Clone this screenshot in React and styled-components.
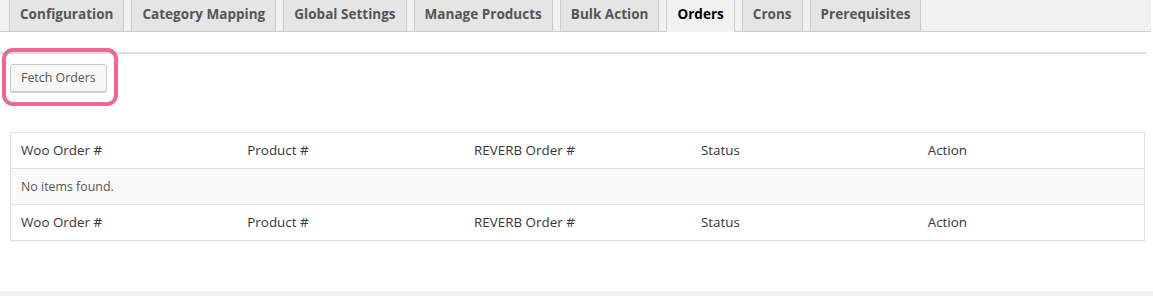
import styled, { createGlobalStyle } from "styled-components";

const GlobalStyle = createGlobalStyle`
  body {
    margin: 0;
    background: #ffffff;
    font-family: "Open Sans", "Noto Sans", sans-serif;
  }
`;

const tabs = [
  "Configuration",
  "Category Mapping",
  "Global Settings",
  "Manage Products",
  "Bulk Action",
  "Orders",
  "Crons",
  "Prerequisites",
];

const columns = ["Woo Order #", "Product #", "REVERB Order #", "Status", "Action"];

const Page = styled.div`
  width: 1153px;
`;

const TabBar = styled.nav`
  display: flex;
  gap: 7px;
  width: 1151px;
  height: 32px;
  box-sizing: border-box;
  padding-left: 9px;
  background: #f1f1f1;
  border-bottom: 1px solid #cccccc;
`;

const Tab = styled.a`
  display: block;
  padding: 2px 10px 5px;
  margin-bottom: -1px;
  line-height: 24px;
  font-size: 13.5px;
  font-weight: 700;
  letter-spacing: 0.02px;
  color: ${(p) => (p.$active ? "#000000" : "#555555")};
  background: ${(p) => (p.$active ? "#f1f1f1" : "#e5e5e5")};
  border: 1px solid #cccccc;
  border-top: none;
  border-bottom-color: ${(p) => (p.$active ? "#f1f1f1" : "#cccccc")};
  text-decoration: none;
  white-space: nowrap;
`;

const Panel = styled.section`
  height: 259px;
  box-sizing: border-box;
  padding-top: 20px;
`;

const Divider = styled.hr`
  margin: 0;
  width: 1146px;
  height: 2px;
  border: none;
  background: #dddddd;
`;

const ActionRow = styled.div`
  position: relative;
  display: flex;
  padding: 10px 0 0 10px;
`;

const Highlight = styled.span`
  position: absolute;
  left: 2px;
  top: -6px;
  width: 116px;
  height: 58px;
  box-sizing: border-box;
  border: 4px solid #ef6792;
  border-radius: 11px;
  pointer-events: none;
`;

const Button = styled.button`
  height: 28px;
  padding: 0 10px;
  font-family: inherit;
  font-size: 12.4px;
  line-height: 26px;
  color: #555555;
  background: #f7f7f7;
  border: 1px solid #cccccc;
  border-radius: 3px;
  box-shadow: 0 1px 0 #cccccc;
  cursor: pointer;
`;

const Table = styled.table`
  width: 1135px;
  margin: 40px 0 0 10px;
  border-collapse: collapse;
  table-layout: fixed;
  border: 1px solid #e1e1e1;
  box-shadow: 0 1px 1px rgba(0, 0, 0, 0.04);
`;

const HeadCell = styled.th`
  padding: 8px 10px;
  height: 19px;
  line-height: 19px;
  font-size: 13.4px;
  font-weight: 400;
  text-align: left;
  color: #32373c;
  background: #ffffff;
  border-bottom: 1px solid #e1e1e1;
`;

const EmptyCell = styled.td`
  padding: 8px 10px;
  height: 19px;
  line-height: 19px;
  font-size: 12.4px;
  color: #555555;
  background: #f9f9f9;
  border-bottom: 1px solid #e1e1e1;
`;

const BottomBand = styled.div`
  height: 5px;
  background: #f1f1f1;
`;

export default function App() {
  return (
    <Page>
      <GlobalStyle />
      <TabBar>
        {tabs.map((t) => (
          <Tab key={t} href="#" $active={t === "Orders"}>
            {t}
          </Tab>
        ))}
      </TabBar>
      <Panel>
        <Divider />
        <ActionRow>
          <Button>Fetch Orders</Button>
          <Highlight />
        </ActionRow>
        <Table>
          <thead>
            <tr>
              {columns.map((c) => (
                <HeadCell key={c}>{c}</HeadCell>
              ))}
            </tr>
          </thead>
          <tbody>
            <tr>
              <EmptyCell colSpan={5}>No items found.</EmptyCell>
            </tr>
          </tbody>
          <tfoot>
            <tr>
              {columns.map((c) => (
                <HeadCell key={c}>{c}</HeadCell>
              ))}
            </tr>
          </tfoot>
        </Table>
      </Panel>
      <BottomBand />
    </Page>
  );
}
